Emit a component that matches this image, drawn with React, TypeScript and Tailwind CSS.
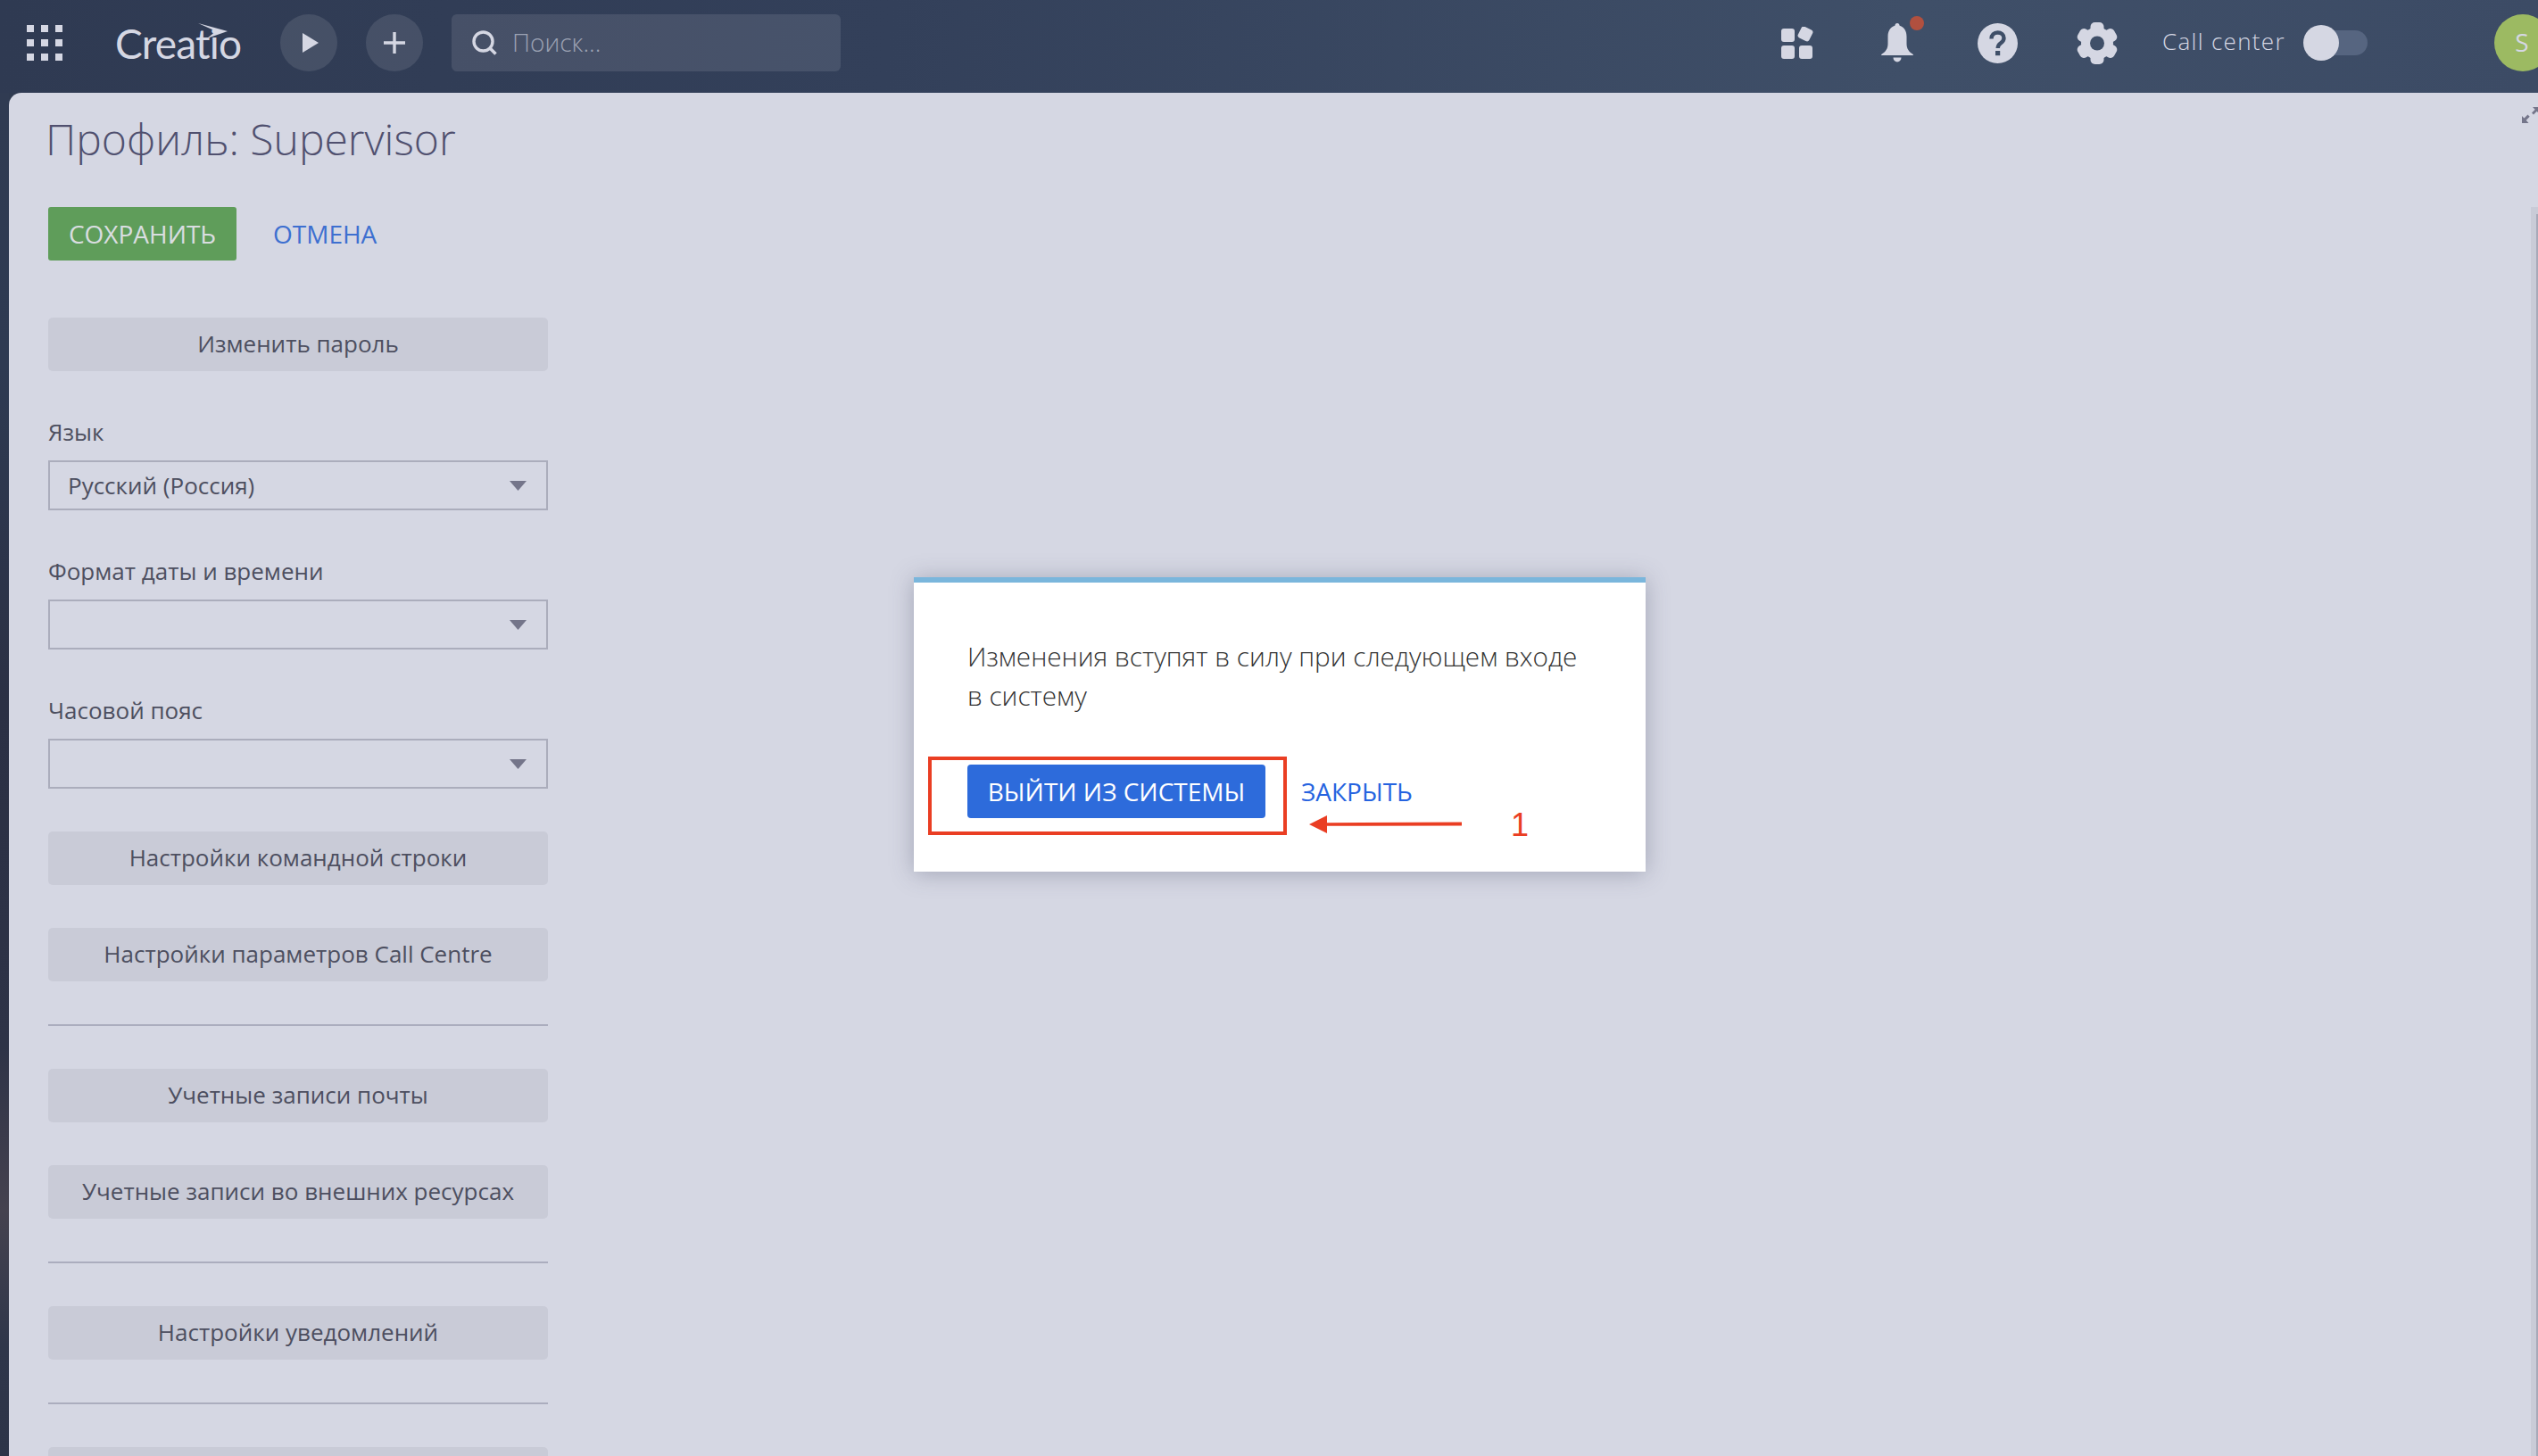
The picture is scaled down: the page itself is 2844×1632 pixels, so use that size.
import React from "react";

const font = "font-['Open_Sans','Noto_Sans',sans-serif]";

function Btn({ children }: { children: React.ReactNode }) {
  return (
    <button className="h-[60px] w-full rounded-[5px] bg-[#c9cbd7] pb-[2px] text-center text-[26px] text-[#4d4f60]">
      {children}
    </button>
  );
}

function Divider() {
  return <div className="h-[2px] w-full bg-[#abadbe]" />;
}

function Field({ label, value }: { label: string; value?: string }) {
  return (
    <div className="flex flex-col">
      <div className="h-[52px] text-[26px] leading-[40px] text-[#4d4f60]">{label}</div>
      <div className="flex h-[56px] items-center justify-between border-2 border-[#abadbc] pl-[20px] pr-[22px]">
        <span className="text-[26px] text-[#4d4f60]">{value}</span>
        <svg width="19" height="11" viewBox="0 0 19 11">
          <path d="M0 0H19L9.5 11Z" fill="#74758a" />
        </svg>
      </div>
    </div>
  );
}

function AppsIcon() {
  return (
    <svg width="37" height="36" viewBox="0 0 37 36" fill="#d5d7e3">
      <rect x="1" y="2" width="15" height="15" rx="3" />
      <rect x="21" y="21" width="15" height="15" rx="3" />
      <rect x="1" y="21" width="15" height="15" rx="3" />
      <rect x="21" y="1" width="14" height="14" rx="3" transform="rotate(27 28 8)" />
    </svg>
  );
}

function BellIcon() {
  return (
    <svg width="36" height="44" viewBox="0 0 36 44" fill="#d5d7e3">
      <path d="M18 0c1.5 0 2.6 1.100 2.600 2.800C26 4.400 28.500 9 28.500 15v8c0 5.500 2.500 9 6.700 11.400.6.400.8 1 .8 1.600H0c0-.6.2-1.200.8-1.600C5 32 7.500 28.500 7.500 23v-8C7.500 9 10 4.400 15.400 2.800 15.400 1.100 16.500 0 18 0Z" />
      <path d="M13.500 38.500h9a4.500 5 0 0 1-9 0Z" />
    </svg>
  );
}

function HelpIcon() {
  return (
    <svg width="45" height="45" viewBox="0 0 45 45">
      <circle cx="22.500" cy="22.500" r="22.500" fill="#d5d7e3" />
      <path d="M15.500 17.500c0-4.300 3-7 7-7s7 2.600 7 6.200c0 3-1.800 4.300-3.800 5.800-1.900 1.400-3 2.700-3 5.500" fill="none" stroke="#3f4f68" strokeWidth="4.400" />
      <rect x="20" y="31" width="5.200" height="5.200" fill="#3f4f68" />
    </svg>
  );
}

function GearIcon() {
  return (
    <svg width="46" height="47" viewBox="0 0 46 47" fill="#d5d7e3">
      <circle cx="23" cy="23.500" r="18" />
      <rect x="15.500" y="0" width="15" height="47" rx="5" />
      <rect x="15.500" y="0" width="15" height="47" rx="5" transform="rotate(60 23 23.500)" />
      <rect x="15.500" y="0" width="15" height="47" rx="5" transform="rotate(120 23 23.500)" />
      <circle cx="23" cy="23.500" r="8" fill="#3f4f68" />
    </svg>
  );
}

export default function App() {
  return (
    <div className={`${font} flex h-screen w-full flex-col overflow-hidden bg-[#2f3a50]`}>
      <header className="flex h-[104px] shrink-0 items-center bg-[linear-gradient(95deg,#2f3a52_0%,#33405a_35%,#3f4f68_75%,#3c4b65_100%)] pb-[8px] pl-[30px] pr-0">
        <div className="grid w-[40px] grid-cols-3 gap-[8px]">
          {Array.from({ length: 9 }).map((_, i) => (
            <span key={i} className="h-[8px] w-[8px] bg-[#d5d7e3]" />
          ))}
        </div>
        <div className="relative ml-[60px] h-[52px] w-[144px]">
          <span className="absolute left-[-1px] top-[1px] font-['Lato',sans-serif] text-[46px] font-normal leading-[52px] tracking-[-0.800px] text-[#d5d7e3]">
            Creatio
          </span>
          <svg className="absolute left-[88px] top-[4px]" width="40" height="22" viewBox="0 0 40 22">
            <path d="M4 0 37 9 14 17 24 9Z" fill="#d5d7e3" />
          </svg>
        </div>
        <div className="ml-[40px] flex h-[64px] w-[64px] items-center justify-center rounded-full bg-white/10 pl-[3px]">
          <svg width="18" height="22" viewBox="0 0 18 22">
            <path d="M0 0 18 11 0 22Z" fill="#d5d7e3" />
          </svg>
        </div>
        <div className="ml-[32px] flex h-[64px] w-[64px] items-center justify-center rounded-full bg-white/10">
          <svg width="24" height="24" viewBox="0 0 24 24">
            <path d="M12 0V24M0 12H24" stroke="#d5d7e3" strokeWidth="3.400" />
          </svg>
        </div>
        <div className="ml-[32px] flex h-[64px] w-[436px] items-center rounded-[6px] bg-white/10 pl-[23px]">
          <svg width="28" height="28" viewBox="0 0 28 28" fill="none">
            <circle cx="12.500" cy="12.500" r="10.500" stroke="#d5d7e3" strokeWidth="3.400" />
            <path d="M20 20 26.500 26.500" stroke="#d5d7e3" strokeWidth="3.600" />
          </svg>
          <span className="mb-[3px] ml-[17px] text-[28px] font-light text-[#9ca2b3]">Поиск...</span>
        </div>
        <div className="ml-auto mr-[-15px] flex items-center">
          <AppsIcon />
          <div className="relative ml-[76px] h-[44px]">
            <BellIcon />
            <span className="absolute left-[32px] top-[-8px] h-[16px] w-[16px] rounded-full bg-[#b1503f]" />
          </div>
          <div className="ml-[72px] flex">
            <HelpIcon />
          </div>
          <div className="ml-[66px] flex">
            <GearIcon />
          </div>
          <span className="mb-[3px] ml-[50px] w-[136px] whitespace-nowrap text-[26px] font-light tracking-[1.300px] text-[#d5d7e3]">
            Call center
          </span>
          <div className="relative ml-[22px] h-[40px] w-[72px]">
            <span className="absolute right-0 top-[6px] h-[28px] w-[60px] rounded-full bg-[#566580]" />
            <span className="absolute left-0 top-0 h-[40px] w-[40px] rounded-full bg-[#d5d7e3]" />
          </div>
          <div className="ml-[142px] flex h-[64px] w-[64px] items-center justify-center rounded-full bg-[#9cba62] pb-[3px] pr-[2px] text-[28px] text-[#d5d7e3]">
            S
          </div>
        </div>
      </header>

      <div className="flex min-h-0 flex-1">
        <div className="w-[10px] shrink-0 bg-[linear-gradient(180deg,#303b52_0%,#2e3a52_20%,#2b3044_45%,#2e3347_70%,#45424f_82%,#2f364a_92%,#2d3448_100%)]" />
        <main className="relative min-w-0 flex-1 overflow-hidden rounded-tl-[14px] bg-[#d5d7e3] pl-[44px]">
          <h1 className="ml-[-3px] mt-[22px] h-[60px] text-[48px] font-light leading-[60px] text-[#50506f]">Профиль: Supervisor</h1>
          <div className="mt-[46px] flex h-[60px] items-center">
            <button className="h-[60px] w-[211px] rounded-[3px] bg-[#5f9d5a] text-[28px] text-[#d9dde0]">СОХРАНИТЬ</button>
            <span className="ml-[41px] text-[28px] text-[#3d6fd0]">ОТМЕНА</span>
          </div>
          <div className="mt-[64px] flex w-[560px] flex-col gap-[48px]">
            <Btn>Изменить пароль</Btn>
            <Field label="Язык" value="Русский (Россия)" />
            <Field label="Формат даты и времени" />
            <Field label="Часовой пояс" />
            <Btn>Настройки командной строки</Btn>
            <Btn>Настройки параметров Call Centre</Btn>
            <Divider />
            <Btn>Учетные записи почты</Btn>
            <Btn>Учетные записи во внешних ресурсах</Btn>
            <Divider />
            <Btn>Настройки уведомлений</Btn>
            <Divider />
            <Btn>&nbsp;</Btn>
          </div>

          <svg className="absolute right-[-2px] top-[16px]" width="20" height="18" viewBox="0 0 20 18" fill="#74758a">
            <path d="M12 0h7v7l-2.300-2.300-3.700 3.700-2-2 3.700-3.700Z" />
            <path d="M0 18v-8l2.500 2.500 4-4 2.200 2.200-4 4L7.500 18Z" />
          </svg>

          <div className="absolute bottom-0 right-0 top-[128px] w-[8px] bg-[#c9cbd7]">
            <div className="absolute bottom-0 right-0 top-[8px] w-[2px] bg-[#a7a9b8]" />
          </div>

          <div className="absolute left-[1014px] top-[543px] h-[330px] w-[820px] border-t-[6px] border-[#7ab6dc] bg-white pl-[60px] pr-[60px] pt-[61px] shadow-[0_2px_24px_rgba(70,75,100,0.35)]">
            <p className="text-[29.700px] font-light leading-[44px] text-[#333333]">
              Изменения вступят в силу при следующем входе в систему
            </p>
            <div className="mt-[55px] flex h-[60px] items-center">
              <button className="h-[60px] w-[334px] rounded-[4px] bg-[#2d6bdb] text-[28px] text-white">ВЫЙТИ ИЗ СИСТЕМЫ</button>
              <span className="ml-[40px] text-[28px] text-[#2563e0]">ЗАКРЫТЬ</span>
            </div>
            <div className="absolute left-[16px] top-[195px] h-[88px] w-[402px] border-[4px] border-[#ea3e23]" />
            <svg className="absolute left-[443px] top-[260px]" width="172" height="22" viewBox="0 0 172 22">
              <path d="M0 11 20 1V9.300L171 8.500V12.500L20 12.800V21Z" fill="#ea3e23" />
            </svg>
            <span className="absolute left-[669px] top-[250px] font-['Liberation_Sans',sans-serif] text-[36px] leading-[44px] text-[#ea3e23]">
              1
            </span>
          </div>
        </main>
      </div>
    </div>
  );
}
